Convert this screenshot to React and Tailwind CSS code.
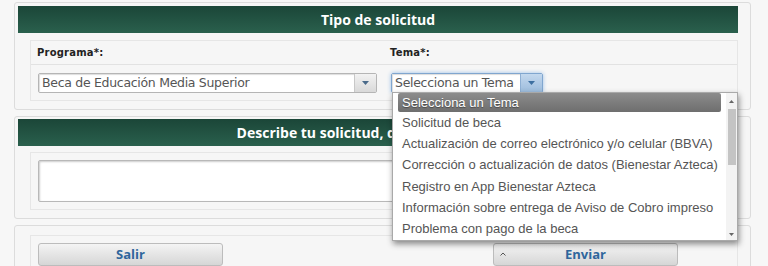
import React from "react";

const Caret = ({ color = "#555" }) => (
  <svg width="7" height="4" viewBox="0 0 7 4"><path d="M0 0h7L3.5 4z" fill={color} /></svg>
);

function SelectBox({ text, width, focus }) {
  return (
    <div
      className={`flex h-[20px] rounded-[2px] border ${focus ? "border-[#80a6cf] shadow-[0_0_4px_#9cc0e6]" : "border-[#b5b5b5]"}`}
      style={{ width }}
    >
      <div className="flex-1 bg-white flex items-center pl-[3px] text-[12.5px] text-[#555] font-['DejaVu_Sans',sans-serif] tracking-[-0.3px] shadow-[inset_1px_1px_1px_#ddd] whitespace-nowrap overflow-hidden">
        {text}
      </div>
      <div
        className={`w-[22px] flex items-center justify-center border-l ${focus ? "border-[#8fb0d4] bg-gradient-to-b from-[#c3d8ee] to-[#9dbcdc]" : "border-[#c8c8c8] bg-gradient-to-b from-[#f2f2f2] to-[#d9d9d9]"}`}
      >
        <Caret color={focus ? "#3d6fa0" : "#4a6a8a"} />
      </div>
    </div>
  );
}

const Header = ({ children }) => (
  <div className="h-[27px] bg-gradient-to-b from-[#1b4638] to-[#2a604d] flex items-center justify-center text-white font-bold text-[14px] font-['Open_Sans',sans-serif] whitespace-nowrap overflow-hidden">
    {children}
  </div>
);

const options = [
  "Solicitud de beca",
  "Actualización de correo electrónico y/o celular (BBVA)",
  "Corrección o actualización de datos (Bienestar Azteca)",
  "Registro en App Bienestar Azteca",
  "Información sobre entrega de Aviso de Cobro impreso",
  "Problema con pago de la beca",
];

export default function App() {
  return (
    <div className="relative w-[768px] h-[266px] overflow-hidden bg-[#f7f7f7]">
      <div className="ml-[14px] w-[737px] pt-[2px] flex flex-col gap-[6px]">
        {/* Panel 1 */}
        <div className="h-[108px] border border-[#dcdcdc] rounded-[3px] bg-[#f6f6f6] pl-[3px] pr-[12px] pt-[3px]">
          <Header>Tipo de solicitud</Header>
          <div className="mt-[7px] ml-[12px] border border-[#e6e6e6] bg-[#f6f6f6] grid grid-cols-2">
            <div className="h-[24px] border-b border-[#e2e2e2] flex items-center pl-[6px] text-[10px] font-bold text-[#222] tracking-[0.2px] font-['DejaVu_Sans',sans-serif]">
              Programa*:
            </div>
            <div className="h-[24px] border-b border-[#e2e2e2] flex items-center pl-[6px] text-[10px] font-bold text-[#222] tracking-[0.2px] font-['DejaVu_Sans',sans-serif]">
              Tema*:
            </div>
            <div className="pt-[8px] pb-[7px] pl-[7px]">
              <SelectBox text="Beca de Educación Media Superior" width={339} />
            </div>
            <div className="pt-[8px] pb-[7px] pl-[7px]">
              <SelectBox text="Selecciona un Tema" width={152} focus />
            </div>
          </div>
        </div>

        {/* Panel 2 */}
        <div className="h-[103px] border border-[#dcdcdc] rounded-[3px] bg-[#f6f6f6] pl-[3px] pr-[12px] pt-[2px]">
          <Header>
            <span className="pl-[58px]">Describe tu solicitud, de manera clara y concreta</span>
          </Header>
          <div className="mt-[6px] ml-[12px] border border-[#e6e6e6] bg-[#f6f6f6] p-[7px]">
            <div className="h-[42px] bg-white border border-[#b8b8b8] rounded-[2px] shadow-[inset_1px_1px_2px_#ccc]" />
          </div>
        </div>

        {/* Panel 3 */}
        <div className="h-[60px] border border-[#dcdcdc] rounded-[3px] bg-[#f6f6f6] pl-[3px] pr-[12px] pt-[9px]">
          <div className="ml-[12px] border border-[#e6e6e6] bg-[#f6f6f6] pt-[7px] pl-[7px] flex">
            <button className="w-[185px] h-[23px] rounded-[3px] border border-[#bcbcbc] bg-gradient-to-b from-[#f4f4f4] to-[#d6d6d6] text-[#2f669c] font-bold text-[13px] font-['Open_Sans',sans-serif]">
              Salir
            </button>
            <button className="relative ml-[270px] w-[185px] h-[23px] rounded-[3px] border border-[#bcbcbc] bg-gradient-to-b from-[#f4f4f4] to-[#d6d6d6] text-[#2f669c] font-bold text-[13px] font-['Open_Sans',sans-serif]">
              <svg className="absolute left-[6px] top-[8px]" width="6" height="4" viewBox="0 0 6 4">
                <path d="M0.5 3.5L3 1l2.5 2.5" stroke="#555" strokeWidth="1" fill="none" />
              </svg>
              Enviar
            </button>
          </div>
        </div>
      </div>

      {/* Dropdown list */}
      <div className="absolute left-[392px] top-[92px] w-[346px] h-[149px] bg-white border border-[#a9a9a9] shadow-[1px_3px_6px_rgba(0,0,0,0.45)] flex font-['Liberation_Sans',Arial,sans-serif] text-[13px] text-[#555]">
        <div className="flex-1 pl-[5px] pr-[5px]">
          <div className="h-[19px] rounded-[2px] bg-gradient-to-b from-[#8c8c8c] to-[#6e6e6e] text-white flex items-center pl-[4px] [text-shadow:0_1px_1px_rgba(0,0,0,0.4)]">
            Selecciona un Tema
          </div>
          {options.map((o) => (
            <div key={o} className="h-[21.3px] flex items-center pl-[4px] whitespace-nowrap">
              {o}
            </div>
          ))}
        </div>
        <div className="w-[11px] bg-[#f3f3f3] flex flex-col items-center">
          <div className="h-[16px] flex items-center justify-center">
            <svg width="5" height="3" viewBox="0 0 5 3"><path d="M0 3L2.5 0 5 3z" fill="#666" /></svg>
          </div>
          <div className="w-[8px] h-[56px] bg-[#c4c4c4]" />
          <div className="flex-1" />
          <div className="h-[12px] flex items-center justify-center">
            <svg width="5" height="3" viewBox="0 0 5 3"><path d="M0 0h5L2.5 3z" fill="#666" /></svg>
          </div>
        </div>
      </div>
    </div>
  );
}
